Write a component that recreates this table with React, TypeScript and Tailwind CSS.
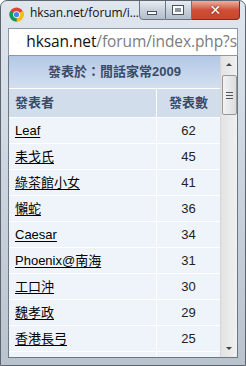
import React from "react";

const rows: [string, number][] = [
  ["Leaf", 62],
  ["耒戈氏", 45],
  ["綠茶館小女", 41],
  ["懶蛇", 36],
  ["Caesar", 34],
  ["Phoenix@南海", 31],
  ["工口沖", 30],
  ["魏孝政", 29],
  ["香港長弓", 25],
  ["", 0],
];

const cjk = { fontFamily: '"Liberation Sans", "Noto Sans CJK TC", sans-serif' };

function ChromeIcon() {
  return (
    <svg width="15" height="15" viewBox="0 0 16 16">
      <circle cx="8" cy="8" r="7.5" fill="#db4437" />
      <path d="M8 8 L14.5 4.25 A7.5 7.5 0 0 1 8 15.5 Z" fill="#f4c20d" />
      <path d="M8 8 L8 15.5 A7.5 7.5 0 0 1 1.5 4.25 Z" fill="#0f9d58" />
      <circle cx="8" cy="8" r="3.6" fill="#fff" />
      <circle cx="8" cy="8" r="2.8" fill="#4285f4" />
    </svg>
  );
}

export default function App() {
  return (
    <div
      className="relative w-[246px] h-[366px] flex flex-col overflow-hidden rounded-t-[7px] border border-[#5d6570] bg-gradient-to-b from-[#dfe6ee] via-[#cbd4de] to-[#b9c3ce]"
      style={{ fontFamily: '"Open Sans", "Liberation Sans", sans-serif' }}
    >
      {/* title bar */}
      <div className="h-[27px] flex items-start shrink-0">
        <div className="pl-[8px] pt-[6px]">
          <ChromeIcon />
        </div>
        <div className="pl-[6px] pt-[4px] text-[12px] leading-[16px] text-[#111] tracking-[-0.1px]">
          hksan.net/forum/i...
        </div>
        <div className="ml-auto mr-[7px] flex h-[20px] -mt-px">
          <div className="w-[27px] h-[20px] border border-[#6b7480] rounded-bl-[4px] bg-gradient-to-b from-[#e8edf2] via-[#c9d2dc] to-[#b2bdc9] flex items-center justify-center">
            <div className="w-[10px] h-[4px] mt-[5px] bg-white border border-[#4a525c]" />
          </div>
          <div className="w-[26px] h-[20px] border-y border-r border-[#6b7480] bg-gradient-to-b from-[#e8edf2] via-[#c9d2dc] to-[#b2bdc9] flex items-center justify-center">
            <div className="w-[10px] h-[8px] border-[2px] border-white outline outline-1 outline-[#4a525c] bg-[#8a95a2]" />
          </div>
          <div className="w-[48px] h-[20px] border-y border-r border-[#7a2e22] rounded-br-[4px] bg-gradient-to-b from-[#eab0a0] via-[#cf4e36] to-[#c7452d] flex items-center justify-center">
            <span className="text-white text-[14px] font-bold leading-none" style={{ fontFamily: '"DejaVu Sans", sans-serif', textShadow: "0 0 2px #5a1a10" }}>
              ✕
            </span>
          </div>
        </div>
      </div>

      {/* address bar */}
      <div className="mx-[7px] h-[28px] shrink-0 bg-white border border-[#8e98a4] flex items-center">
        <svg width="12" height="15" viewBox="0 0 12 15" className="ml-[9px]">
          <path d="M0.5 0.5 H7.5 L11.5 4.5 V14.5 H0.5 Z" fill="#fff" stroke="#9a9a9a" />
          <path d="M7.5 0.5 V4.5 H11.5" fill="#eee" stroke="#9a9a9a" />
        </svg>
        <div className="ml-[7px] text-[15.5px] leading-none whitespace-nowrap tracking-[-0.1px]">
          <span className="text-[#111]">hksan.net</span>
          <span className="text-[#7c7c7c]">/forum/index.php?s</span>
        </div>
      </div>

      {/* content */}
      <div className="mx-[7px] flex-1 flex border-x border-[#6d7886] bg-white overflow-hidden min-h-0">
        <div className="flex-1 flex flex-col overflow-hidden" style={cjk}>
          <div className="h-[32px] shrink-0 bg-gradient-to-b from-[#b3c8e6] to-[#d4e0f0] flex items-center justify-center text-[13px] font-bold text-[#394a68]">
            發表於：閒話家常2009
          </div>
          <div className="h-[29px] shrink-0 flex border-t border-white">
            <div className="flex-1 bg-[#d2ddeb] flex items-center pl-[6px] text-[13px] font-bold text-[#394a68]">發表者</div>
            <div className="w-[64px] border-l border-white bg-[#d2ddeb] flex items-center justify-center text-[13px] font-bold text-[#394a68]">發表數</div>
          </div>
          {rows.map(([name, n], i) => (
            <div key={i} className="h-[26px] shrink-0 flex border-t border-white">
              <div className="flex-1 bg-[#eff4fb] flex items-center pl-[6px] text-[13px] text-black">
                <span className="underline underline-offset-[2px]">{name}</span>
              </div>
              <div className="w-[64px] border-l border-white bg-[#eff4fb] flex items-center justify-center text-[13px] text-[#222]">
                {n ? n : ""}
              </div>
            </div>
          ))}
        </div>
        {/* scrollbar */}
        <div className="w-[17px] shrink-0 bg-gradient-to-r from-[#e3e3e3] to-[#f0f0f0] border-l border-[#d6d6d6] flex flex-col items-center">
          <div className="h-[17px] w-full flex items-center justify-center">
            <div className="w-0 h-0 border-l-[3px] border-r-[3px] border-b-[3px] border-l-transparent border-r-transparent border-b-[#444]" />
          </div>
          <div className="w-[15px] h-[40px] mt-[2px] rounded-[2px] border border-[#979797] bg-gradient-to-r from-[#f3f3f3] to-[#dcdcdc] flex flex-col items-center justify-center gap-[2px]">
            <div className="w-[7px] h-px bg-[#555]" />
            <div className="w-[7px] h-px bg-[#555]" />
            <div className="w-[7px] h-px bg-[#555]" />
          </div>
          <div className="flex-1" />
          <div className="h-[17px] w-full flex items-center justify-center">
            <div className="w-0 h-0 border-l-[3px] border-r-[3px] border-t-[3px] border-l-transparent border-r-transparent border-t-[#444]" />
          </div>
        </div>
      </div>

      {/* bottom frame */}
      <div className="h-[8px] shrink-0 mx-[7px] border-t border-[#6d7886]" />
    </div>
  );
}
